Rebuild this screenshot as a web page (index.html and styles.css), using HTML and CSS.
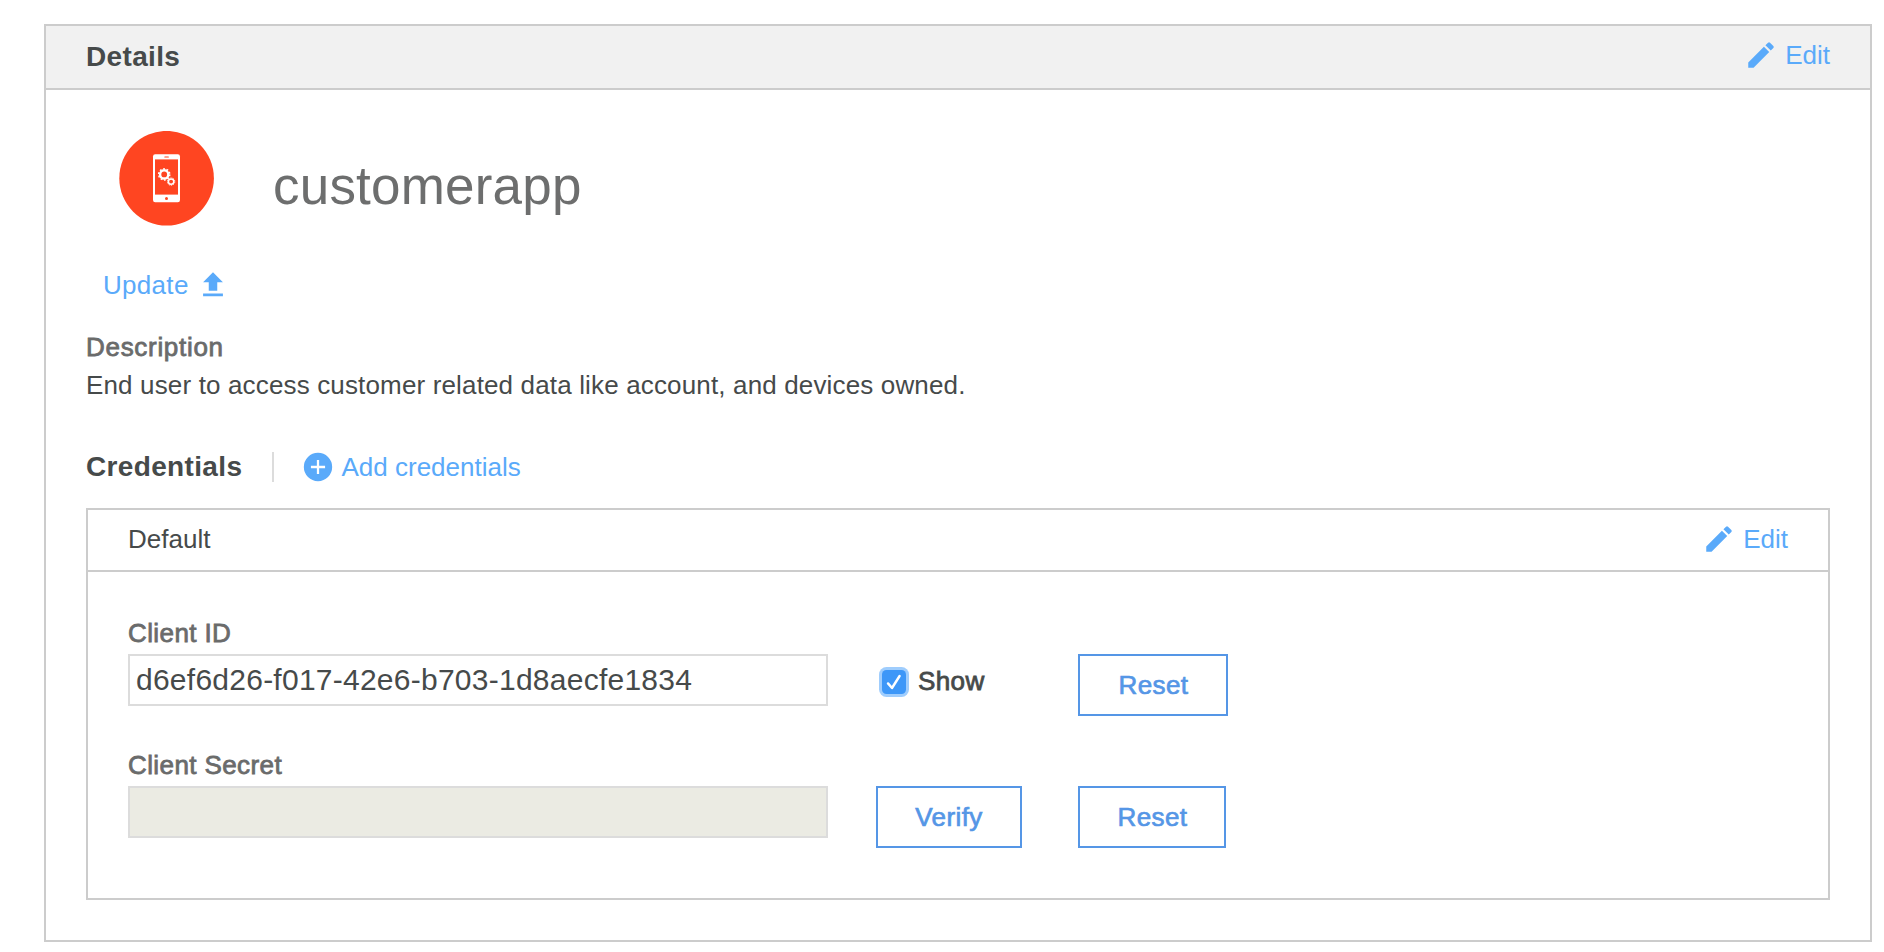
FILE: index.html
```html
<!DOCTYPE html>
<html lang="en">
<head>
<meta charset="utf-8">
<title>customerapp</title>
<link rel="stylesheet" href="styles.css">
</head>
<body>
<section class="panel">
  <header class="panel-header">
    <h2 class="panel-title">Details</h2>
    <a class="edit">
      <svg class="icon" viewBox="0 0 24 24"><path d="M3 17.25V21h3.75L17.81 9.94l-3.75-3.75L3 17.25zM20.71 7.04a1 1 0 0 0 0-1.41l-2.34-2.34a1 1 0 0 0-1.41 0l-1.83 1.83 3.75 3.75 1.83-1.83z"/></svg>
      <span class="link-text">Edit</span>
    </a>
  </header>
  <div class="panel-body">
    <div class="app">
      <svg class="app-icon" viewBox="0 0 95 95">
        <circle cx="47.6" cy="47.2" r="47.3" fill="#ff4521"/>
        <rect x="34" y="23.3" width="27" height="48" rx="2.2" fill="#fff"/>
        <rect x="36" y="28.4" width="23" height="35.2" fill="#ff4521"/>
        <rect x="45.3" y="25.4" width="4.6" height="1" rx=".5" fill="#ff4521"/>
        <circle cx="47.5" cy="67.5" r="1.5" fill="#ff4521"/>
        <g fill="none" stroke="#fff">
          <circle cx="45.2" cy="43.4" r="4.1" stroke-width="2.4"/>
          <circle cx="45.2" cy="43.4" r="5.6" stroke-width="1.4" stroke-dasharray="1.76 1.76"/>
          <circle cx="52.1" cy="50.6" r="2.7" stroke-width="1.5"/>
          <circle cx="52.1" cy="50.6" r="3.7" stroke-width=".9" stroke-dasharray="1.3 1.02"/>
        </g>
      </svg>
      <h1 class="app-name">customerapp</h1>
    </div>
    <a class="update">
      <span class="link-text update-text">Update</span>
      <svg class="icon" viewBox="0 0 24 24"><path d="M9 16h6v-6h4l-7-7-7 7h4zM5 18h14v2H5z"/></svg>
    </a>
    <h3 class="label description-label">Description</h3>
    <p class="description">End user to access customer related data like account, and devices owned.</p>
    <div class="credentials-bar">
      <h2 class="credentials-title">Credentials</h2>
      <a class="add">
        <svg class="icon" viewBox="0 0 24 24"><path d="M12 2a10 10 0 1 0 0 20 10 10 0 0 0 0-20zm5 10.8h-4.2V17h-1.6v-4.2H7v-1.6h4.2V7h1.6v4.2H17z"/></svg>
        <span class="link-text add-text">Add credentials</span>
      </a>
    </div>
    <section class="card">
      <header class="card-header">
        <span class="card-title">Default</span>
        <a class="edit">
          <svg class="icon" viewBox="0 0 24 24"><path d="M3 17.25V21h3.75L17.81 9.94l-3.75-3.75L3 17.25zM20.71 7.04a1 1 0 0 0 0-1.41l-2.34-2.34a1 1 0 0 0-1.41 0l-1.83 1.83 3.75 3.75 1.83-1.83z"/></svg>
          <span class="link-text">Edit</span>
        </a>
      </header>
      <div class="card-body">
        <div class="label client-label">Client ID</div>
        <div class="row">
          <div class="field">d6ef6d26-f017-42e6-b703-1d8aecfe1834</div>
          <label class="show">
            <svg class="checkbox" viewBox="0 0 30 30">
              <rect width="30" height="30" rx="7.5" fill="#9fcdfd"/>
              <rect x="3" y="3" width="24" height="24" rx="4.5" fill="#3d97f8"/>
              <path d="M9 16.4l4 4.6 7.6-12" fill="none" stroke="#fff" stroke-width="2.4" stroke-linecap="round" stroke-linejoin="round"/>
            </svg>
            <span class="show-text">Show</span>
          </label>
          <div class="button reset-id">Reset</div>
        </div>
        <div class="label client-label secret-label">Client Secret</div>
        <div class="row">
          <div class="field masked"></div>
          <div class="button verify">Verify</div>
          <div class="button reset-secret">Reset</div>
        </div>
      </div>
    </section>
  </div>
</section>
</body>
</html>
```
FILE: styles.css
```css
* { box-sizing: border-box; }

body {
  margin: 0;
  padding: 24px 12px 10px 44px;
  background: #fff;
  color: #464a4a;
  font: 26px/30px "Liberation Sans", Arial, sans-serif;
}

h1, h2, h3, p { margin: 0; }

.panel {
  height: 918px;
  border: 2px solid #ccc;
}

.panel-header {
  display: flex;
  justify-content: space-between;
  align-items: flex-start;
  height: 64px;
  padding: 14px 40px 0 40px;
  background: #f1f1f1;
  border-bottom: 2px solid #ccc;
}

.panel-title,
.credentials-title {
  margin-top: 1px;
  font-size: 28px;
  line-height: 32px;
  font-weight: 700;
  letter-spacing: .35px;
}

.icon {
  flex: none;
  width: 34px;
  height: 34px;
  fill: #5aaafa;
}

.link-text { color: #5aaafa; }

.edit {
  display: flex;
  align-items: flex-start;
  gap: 7px;
  height: 30px;
}

.edit .icon { margin-top: -2px; }

.panel-body { padding: 41px 40px 0; }

.app {
  display: flex;
  height: 95px;
  padding-left: 33px;
}

.app-icon {
  width: 95px;
  height: 95px;
}

.app-name {
  margin: 25px 0 0 59px;
  font-size: 53px;
  line-height: 60px;
  font-weight: 400;
  letter-spacing: .2px;
  color: #6d6e6e;
}

.update {
  display: flex;
  align-items: center;
  gap: 7px;
  height: 34px;
  margin-top: 42px;
  padding-left: 17px;
}

.update-text { letter-spacing: .3px; }

.label {
  font-size: 26px;
  line-height: 30px;
  font-weight: 400;
  letter-spacing: .4px;
  color: #6a6b6b;
  -webkit-text-stroke: .8px #6a6b6b;
}

.description-label {
  margin-top: 30px;
  letter-spacing: .7px;
}

.description {
  margin-top: 8px;
  letter-spacing: .15px;
}

.credentials-bar {
  display: flex;
  align-items: flex-start;
  height: 34px;
  margin-top: 50px;
}

.credentials-title { width: 186px; }

.add {
  display: flex;
  align-items: center;
  gap: 7px;
  height: 30px;
  margin-top: 2px;
  padding-left: 26.5px;
  border-left: 2px solid #dcdcdc;
}

.card {
  height: 392px;
  margin-top: 24px;
  border: 2px solid #ccc;
}

.card-header {
  display: flex;
  justify-content: space-between;
  align-items: flex-start;
  height: 62px;
  padding: 14px 40px 0 40px;
  border-bottom: 2px solid #ccc;
}

.card-body { padding: 46px 40px 0; }

.row {
  display: flex;
  align-items: flex-start;
  height: 62px;
  margin-top: 6px;
}

.field {
  width: 700px;
  height: 52px;
  padding: 7px 6px;
  border: 2px solid #dcdcdc;
  font-size: 30px;
  line-height: 34px;
  letter-spacing: .25px;
}

.masked { background: #ebebe3; }

.show {
  display: flex;
  align-items: flex-start;
  width: 199px;
  margin: 13px 0 0 51px;
}

.checkbox {
  width: 30px;
  height: 30px;
}

.show-text {
  margin: -1px 0 0 9px;
  letter-spacing: .4px;
  -webkit-text-stroke: .8px #464a4a;
}

.button {
  height: 62px;
  border: 2px solid #5596e6;
  padding: 14px 0 0 1px;
  text-align: center;
  color: #5596e6;
  letter-spacing: .4px;
  -webkit-text-stroke: .7px #5596e6;
}

.reset-id { width: 150px; }

.secret-label { margin-top: 34px; }

.verify {
  width: 146px;
  margin: 0 56px 0 48px;
  padding-left: 0;
}

.reset-secret { width: 148px; }
```
